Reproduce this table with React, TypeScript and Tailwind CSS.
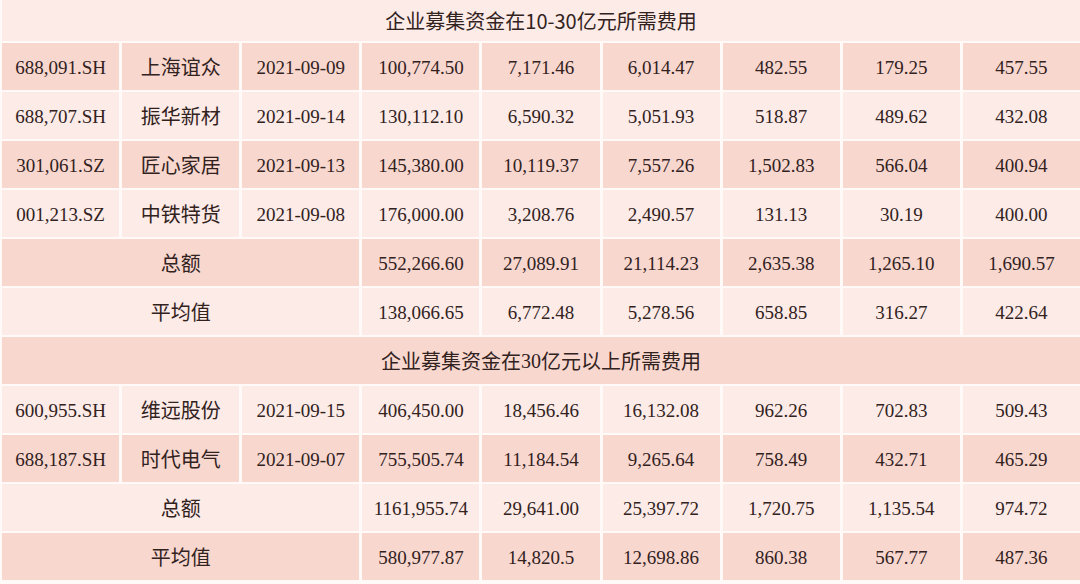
import React from 'react';

type Row =
  | { kind: 'title'; text: React.ReactNode }
  | { kind: 'item'; code: string; name: string; date: string; values: string[] }
  | { kind: 'sum'; label: string; values: string[] };

const rows: Row[] = [
  { kind: 'title', text: <>企业募集资金在10-30亿元所需费用</> },
  { kind: 'item', code: '688,091.SH', name: '上海谊众', date: '2021-09-09', values: ['100,774.50', '7,171.46', '6,014.47', '482.55', '179.25', '457.55'] },
  { kind: 'item', code: '688,707.SH', name: '振华新材', date: '2021-09-14', values: ['130,112.10', '6,590.32', '5,051.93', '518.87', '489.62', '432.08'] },
  { kind: 'item', code: '301,061.SZ', name: '匠心家居', date: '2021-09-13', values: ['145,380.00', '10,119.37', '7,557.26', '1,502.83', '566.04', '400.94'] },
  { kind: 'item', code: '001,213.SZ', name: '中铁特货', date: '2021-09-08', values: ['176,000.00', '3,208.76', '2,490.57', '131.13', '30.19', '400.00'] },
  { kind: 'sum', label: '总额', values: ['552,266.60', '27,089.91', '21,114.23', '2,635.38', '1,265.10', '1,690.57'] },
  { kind: 'sum', label: '平均值', values: ['138,066.65', '6,772.48', '5,278.56', '658.85', '316.27', '422.64'] },
  {
    kind: 'title',
    text: (
      <>
        企业募集资金在<span className="font-['Liberation_Serif',serif]">30</span>亿元以上所需费用
      </>
    ),
  },
  { kind: 'item', code: '600,955.SH', name: '维远股份', date: '2021-09-15', values: ['406,450.00', '18,456.46', '16,132.08', '962.26', '702.83', '509.43'] },
  { kind: 'item', code: '688,187.SH', name: '时代电气', date: '2021-09-07', values: ['755,505.74', '11,184.54', '9,265.64', '758.49', '432.71', '465.29'] },
  { kind: 'sum', label: '总额', values: ['1161,955.74', '29,641.00', '25,397.72', '1,720.75', '1,135.54', '974.72'] },
  { kind: 'sum', label: '平均值', values: ['580,977.87', '14,820.5', '12,698.86', '860.38', '567.77', '487.36'] },
];

// numbers look like Times in the screenshot, names like a CJK sans
const serif = "font-['Liberation_Serif','Times_New_Roman',serif] text-[19px] pt-[3px]";
const cjk = "font-['Noto_Sans_CJK_SC','Noto_Sans',sans-serif] text-[20px]";

export default function App() {
  return (
    <div className="w-[1080px] h-[584px] bg-[#fffaf8] overflow-hidden pl-[2px] flex flex-col gap-y-[2px] text-[#32221e]">
      {rows.map((row, i) => {
        const bg = i % 2 === 0 ? 'bg-[#fcebe6]' : 'bg-[#f8d7ce]';
        const h = i === 0 ? 'h-[41px]' : 'h-[47px]';
        if (row.kind === 'title') {
          return (
            <div key={i} className={`${h} ${bg} ${cjk} flex items-center justify-center shrink-0`}>
              {row.text}
            </div>
          );
        }
        return (
          <div key={i} className={`${h} shrink-0 grid grid-cols-9 gap-x-[3px]`}>
            {row.kind === 'item' ? (
              <>
                <div className={`${bg} ${serif} flex items-center justify-center`}>{row.code}</div>
                <div className={`${bg} ${cjk} flex items-center justify-center`}>{row.name}</div>
                <div className={`${bg} ${serif} flex items-center justify-center`}>{row.date}</div>
              </>
            ) : (
              <div className={`${bg} ${cjk} col-span-3 flex items-center justify-center`}>{row.label}</div>
            )}
            {row.values.map((v, j) => (
              <div key={j} className={`${bg} ${serif} flex items-center justify-center`}>
                {v}
              </div>
            ))}
          </div>
        );
      })}
    </div>
  );
}
